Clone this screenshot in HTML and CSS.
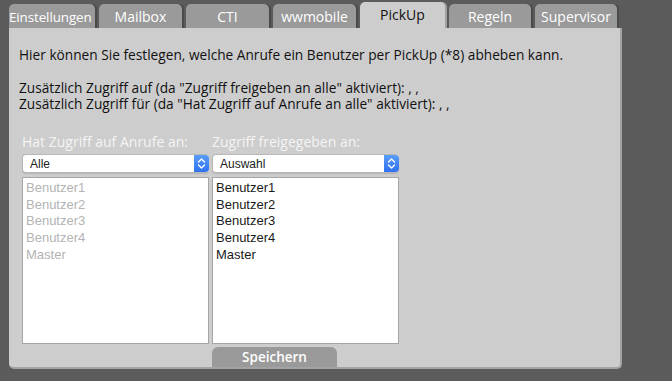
FILE: index.html
```html
<!DOCTYPE html>
<html lang="de">
<head>
<meta charset="utf-8">
<title>PickUp</title>
<link rel="stylesheet" href="styles.css">
</head>
<body>
<div class="tabs">
  <div class="tab tab-first">Einstellungen</div>
  <div class="tab">Mailbox</div>
  <div class="tab">CTI</div>
  <div class="tab">wwmobile</div>
  <div class="tab tab-active">PickUp</div>
  <div class="tab tab-narrow">Regeln</div>
  <div class="tab tab-narrow">Supervisor</div>
</div>
<div class="panel">
  <p class="intro">Hier können Sie festlegen, welche Anrufe ein Benutzer per PickUp (*8) abheben kann.</p>
  <p class="extra">Zusätzlich Zugriff auf (da "Zugriff freigeben an alle" aktiviert): , ,</p>
  <p class="extra">Zusätzlich Zugriff für (da "Hat Zugriff auf Anrufe an alle" aktiviert): , ,</p>
  <div class="cols">
    <div class="col">
      <div class="label">Hat Zugriff auf Anrufe an:</div>
      <div class="select">
        <span class="select-text">Alle</span>
        <svg class="stepper" width="15" height="19" viewBox="0 0 15 19"><defs><linearGradient id="g1" x1="0" y1="0" x2="0" y2="1"><stop offset="0" stop-color="#5c9ff9"/><stop offset="1" stop-color="#2c6ff0"/></linearGradient></defs><path d="M0 0 H11 A4 4 0 0 1 15 4 V15 A4 4 0 0 1 11 19 H0 Z" fill="url(#g1)"/><path d="M4.5 8 L7.5 5 L10.5 8 M4.5 11 L7.5 14 L10.5 11" fill="none" stroke="#fff" stroke-width="1.4" stroke-linecap="round" stroke-linejoin="round"/></svg>
      </div>
      <div class="listbox listbox-disabled">
        <div class="item">Benutzer1</div>
        <div class="item">Benutzer2</div>
        <div class="item">Benutzer3</div>
        <div class="item">Benutzer4</div>
        <div class="item">Master</div>
      </div>
    </div>
    <div class="col">
      <div class="label">Zugriff freigegeben an:</div>
      <div class="select">
        <span class="select-text">Auswahl</span>
        <svg class="stepper" width="15" height="19" viewBox="0 0 15 19"><defs><linearGradient id="g2" x1="0" y1="0" x2="0" y2="1"><stop offset="0" stop-color="#5c9ff9"/><stop offset="1" stop-color="#2c6ff0"/></linearGradient></defs><path d="M0 0 H11 A4 4 0 0 1 15 4 V15 A4 4 0 0 1 11 19 H0 Z" fill="url(#g2)"/><path d="M4.5 8 L7.5 5 L10.5 8 M4.5 11 L7.5 14 L10.5 11" fill="none" stroke="#fff" stroke-width="1.4" stroke-linecap="round" stroke-linejoin="round"/></svg>
      </div>
      <div class="listbox">
        <div class="item">Benutzer1</div>
        <div class="item">Benutzer2</div>
        <div class="item">Benutzer3</div>
        <div class="item">Benutzer4</div>
        <div class="item">Master</div>
      </div>
    </div>
  </div>
  <div class="footer">
    <div class="button">Speichern</div>
  </div>
</div>
</body>
</html>
```

FILE: styles.css
```css
html, body {
  margin: 0;
  padding: 0;
}
body {
  background: #5b5b5b;
  padding-left: 9px;
  font-family: "Open Sans", "DejaVu Sans", sans-serif;
  font-size: 13.7px;
  color: #111;
}
.tabs {
  display: flex;
  align-items: flex-end;
  gap: 4px;
  height: 28px;
}
.tab {
  box-sizing: border-box;
  width: 83px;
  height: 24px;
  background: #9a9a9a;
  color: #fff;
  border-radius: 5px 5px 0 0;
  box-shadow: 2px 0 0 #4a4a4a;
  text-align: center;
  line-height: 26px;
  font-size: 14px;
  white-space: nowrap;
}
.tab-first {
  width: 86px;
  text-align: left;
  font-size: 13.4px;
  letter-spacing: -0.1px;
}
.tab-active {
  width: 85px;
  height: 26px;
  background: #cdcdcd;
  color: #111;
  line-height: 26px;
  box-shadow: 2px 0 0 #a0a0a0;
}
.tab-narrow {
  width: 82px;
}
.panel {
  width: 601px;
  background: #cdcdcd;
  border-right: 2px solid #a3a3a3;
  border-bottom: 2px solid #a3a3a3;
  border-radius: 0 0 5px 5px;
  padding: 19px 0 0 10px;
  box-sizing: content-box;
}
.panel p {
  margin: 0;
  height: 16px;
  line-height: 16px;
  white-space: nowrap;
}
.panel p.intro {
  margin-bottom: 17px;
}
.cols {
  display: flex;
  gap: 3px;
  margin: 22px 0 0 3px;
}
.col {
  width: 187px;
}
.label {
  color: #f4f4f4;
  font-size: 14px;
  line-height: 16px;
  height: 16px;
  margin-bottom: 4px;
  white-space: nowrap;
}
.select {
  box-sizing: border-box;
  height: 19px;
  background: #fff;
  border: 1px solid #b8b8b8;
  border-right: none;
  border-radius: 4px;
  display: flex;
  align-items: center;
  justify-content: space-between;
  font-family: "Liberation Sans", Arial, sans-serif;
  font-size: 12px;
  color: #222;
  margin-bottom: 4px;
  overflow: hidden;
  box-shadow: 0 1px 1px rgba(0, 0, 0, 0.12);
}
.select-text {
  padding-left: 7px;
}
.stepper {
  display: block;
  flex: none;
  margin-top: -1px;
  margin-bottom: -1px;
}
.listbox {
  box-sizing: border-box;
  height: 167px;
  background: #fff;
  border: 1px solid #a6a6a6;
  padding: 2px 0 0 3px;
  font-family: "Liberation Sans", Arial, sans-serif;
  font-size: 13px;
  color: #1a1a1a;
}
.listbox-disabled {
  color: #b3b3b3;
}
.item {
  height: 16.65px;
  line-height: 16.65px;
}
.footer {
  margin-left: 193px;
  margin-top: 3px;
}
.button {
  width: 125px;
  height: 20px;
  background: #9a9a9a;
  color: #fff;
  border-radius: 6px 6px 0 0;
  text-align: center;
  line-height: 21px;
  font-weight: 600;
  font-size: 13.5px;
}
```
